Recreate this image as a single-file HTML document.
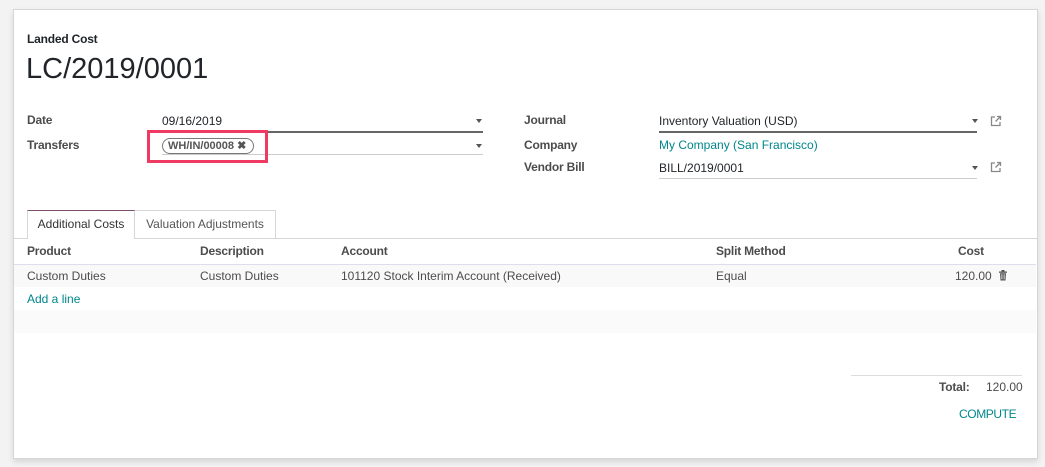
<!DOCTYPE html>
<html><head><style>
body{margin:0;width:1045px;height:467px;background:#f3f3f3;font-family:"Liberation Sans",sans-serif;font-size:12px;color:#4c4c4c;position:relative;overflow:hidden}
.sheet{position:absolute;left:13px;top:9px;width:1023px;height:448px;background:#fff;border:1px solid #d6d6d6;box-shadow:0 3px 6px rgba(0,0,0,.12)}
.a{position:absolute;white-space:nowrap}
.lbl{font-weight:bold;color:#4c4c4c;letter-spacing:-0.2px}
.dk{color:#212529}
.teal{color:#00868b}
.caret{position:absolute;width:0;height:0;border-left:3.5px solid transparent;border-right:3.5px solid transparent;border-top:4px solid #555}
</style></head><body>
<div class="sheet"></div>
<div class="a lbl dk" style="left:27px;top:32px">Landed Cost</div>
<div class="a dk" style="left:26px;top:53px;font-size:29px">LC/2019/0001</div>

<div class="a lbl" style="left:27px;top:113px">Date</div>
<div class="a dk" style="left:162px;top:114px">09/16/2019</div>
<div class="a" style="left:162px;top:131px;width:321px;height:2px;background:#666"></div>
<div class="caret" style="left:476px;top:119px"></div>
<div class="a lbl" style="left:27px;top:138px">Transfers</div>
<div class="a" style="left:162px;top:154px;width:321px;height:1px;background:#ccc"></div>
<div class="caret" style="left:476px;top:144px"></div>
<div class="a" style="left:162px;top:138px;height:14px;width:80px;padding:0 5px;border:1px solid #777;border-radius:8px;font-weight:bold;font-size:11px;line-height:14px;color:#555">WH/IN/00008 ✖</div>
<div class="a" style="left:147px;top:130px;width:121px;height:33px;border:3px solid #ef3b64;box-sizing:border-box"></div>

<div class="a lbl" style="left:524px;top:113px">Journal</div>
<div class="a dk" style="left:659px;top:114px">Inventory Valuation (USD)</div>
<div class="a" style="left:659px;top:131px;width:318px;height:2px;background:#666"></div>
<div class="caret" style="left:972px;top:119px"></div>
<svg class="a" style="left:990px;top:115px" width="12" height="12" viewBox="0 0 12 12" fill="none" stroke="#888" stroke-width="1.3"><path d="M5 2H1.5v8.5H10V7"/><path d="M7 1.5h3.5V5M10.5 1.5 5.5 6.5"/></svg>
<div class="a lbl" style="left:524px;top:138px">Company</div>
<div class="a teal" style="left:659px;top:138px">My Company (San Francisco)</div>
<div class="a lbl" style="left:524px;top:160px">Vendor Bill</div>
<div class="a dk" style="left:659px;top:161px">BILL/2019/0001</div>
<div class="a" style="left:659px;top:178px;width:318px;height:1px;background:#ccc"></div>
<div class="caret" style="left:972px;top:166px"></div>
<svg class="a" style="left:990px;top:161px" width="12" height="12" viewBox="0 0 12 12" fill="none" stroke="#888" stroke-width="1.3"><path d="M5 2H1.5v8.5H10V7"/><path d="M7 1.5h3.5V5M10.5 1.5 5.5 6.5"/></svg>

<div class="a" style="left:13px;top:238px;width:1024px;height:1px;background:#d6d6d6"></div>
<div class="a" style="left:27px;top:210px;width:108px;height:29px;background:#fff;border:1px solid #d6d6d6;border-top:1px solid #7c4f6f;border-bottom:none;box-sizing:border-box;text-align:center;line-height:27px;color:#333">Additional Costs</div>
<div class="a" style="left:135px;top:210px;width:141px;height:28px;border:1px solid #d6d6d6;border-left:none;border-bottom:none;box-sizing:border-box;text-align:center;line-height:27px;color:#555">Valuation Adjustments</div>

<div class="a" style="left:14px;top:264px;width:1022px;height:1px;background:#dde"></div>
<div class="a lbl" style="left:27px;top:244px">Product</div>
<div class="a lbl" style="left:200px;top:244px">Description</div>
<div class="a lbl" style="left:341px;top:244px">Account</div>
<div class="a lbl" style="left:716px;top:244px">Split Method</div>
<div class="a lbl" style="left:958px;top:244px">Cost</div>
<div class="a" style="left:14px;top:265px;width:1022px;height:22px;background:#f9f9f9"></div>
<div class="a" style="left:27px;top:269px">Custom Duties</div>
<div class="a" style="left:200px;top:269px">Custom Duties</div>
<div class="a" style="left:341px;top:269px">101120 Stock Interim Account (Received)</div>
<div class="a" style="left:716px;top:269px">Equal</div>
<div class="a" style="left:955px;top:269px">120.00</div>
<svg class="a" style="left:998px;top:270px" width="10" height="11" viewBox="0 0 10 11" fill="#555"><rect x="1" y="1.5" width="8" height="1.3"/><rect x="3.5" y="0" width="3" height="1.5"/><path d="M2 3.2h6l-.5 7.3h-5z"/><rect x="3.5" y="4.3" width=".8" height="5" fill="#fff"/><rect x="5.7" y="4.3" width=".8" height="5" fill="#fff"/></svg>
<div class="a teal" style="left:27px;top:292px">Add a line</div>
<div class="a" style="left:14px;top:310px;width:1022px;height:23px;background:#fafafa"></div>

<div class="a" style="left:851px;top:375px;width:171px;height:1px;background:#ddd"></div>
<div class="a lbl" style="left:939px;top:380px">Total:</div>
<div class="a" style="left:986px;top:380px">120.00</div>
<div class="a teal" style="left:959px;top:407px;letter-spacing:-0.4px">COMPUTE</div>
</body></html>
